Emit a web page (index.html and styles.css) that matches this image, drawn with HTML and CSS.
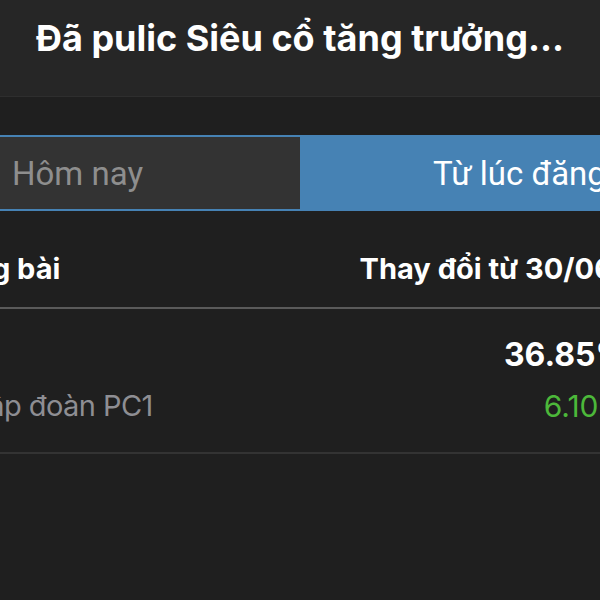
FILE: index.html
```html
<!DOCTYPE html>
<html lang="vi">
<head>
    <meta charset="UTF-8">
    <meta name="viewport" content="width=device-width, initial-scale=1.0">
    <title>Siêu cổ tăng trưởng</title>
    <link rel="stylesheet" href="styles.css">
</head>
<body>
    <header class="nav-bar">
        <h1>Đã pulic Siêu cổ tăng trưởng...</h1>
    </header>

    <div class="segment">
        <div class="segment-option">Hôm nay</div>
        <div class="segment-option active">Từ lúc đăng bài</div>
    </div>

    <div class="table">
        <div class="row head">
            <div class="cell-left">Mã đăng bài</div>
            <div class="cell-right">Thay đổi từ 30/06</div>
        </div>
        <div class="row item">
            <div class="cell-left">
                <span class="ticker">PC1</span>
                <span class="company">CTCP Tập đoàn PC1</span>
            </div>
            <div class="cell-right">
                <span class="price">36.85%</span>
                <span class="change">6.10%</span>
            </div>
        </div>
    </div>
</body>
</html>
```

FILE: styles.css
```css
:root {
    --bg: #1f1f1f;
    --bar: #262626;
    --blue: #4682b4;
    --text: #ffffff;
    --muted: #8e8e93;
    --green: #4cb83a;
}
html, body {
    margin: 0;
    padding: 0;
    width: 600px;
    height: 600px;
    overflow: hidden;
}
body {
    background: var(--bg);
    color: var(--text);
    font-family: Inter, 'Noto Sans', sans-serif;
}
.nav-bar {
    height: 96px;
    background: var(--bar);
    border-bottom: 1px solid #2e2e2e;
    display: flex;
    align-items: center;
    justify-content: center;
}
.nav-bar h1 {
    margin: 0 0 20px;
    font-size: 36px;
    font-weight: 700;
    white-space: nowrap;
}
.segment {
    display: flex;
    margin: 38px 0 0 -40px;
    width: 880px;
    height: 76px;
    box-sizing: border-box;
    border: 2px solid var(--blue);
    background: var(--blue);
}
.segment-option {
    flex: 1;
    display: flex;
    align-items: center;
    font-family: Roboto, sans-serif;
    font-size: 33px;
    white-space: nowrap;
}
.segment-option:first-child {
    flex: 0 0 338px;
    background: #333333;
    color: #8e8e8e;
    padding-left: 50px;
    box-sizing: border-box;
}
.segment-option.active {
    color: #fff;
    padding-left: 133px;
}
.table {
    width: 820px;
    margin-left: -112px;
}
.row {
    display: flex;
    justify-content: space-between;
    white-space: nowrap;
    box-sizing: border-box;
}
.cell-left, .cell-right {
    display: flex;
    flex-direction: column;
}
.cell-right {
    align-items: flex-end;
    margin-right: 80px;
}
.head {
    height: 98px;
    padding-top: 18px;
    align-items: center;
    font-size: 29px;
    font-weight: 700;
    border-bottom: 2px solid #5a5a5a;
}
.head .cell-right {
    padding-right: 15px;
}
.item {
    height: 145px;
    padding-top: 27px;
    border-bottom: 2px solid #333333;
    line-height: 1.2;
}
.ticker, .price {
    font-size: 32px;
    font-weight: 700;
}
.company, .change {
    font-size: 30px;
    margin-top: 14px;
    color: var(--muted);
}
.company {
    font-size: 29px;
    letter-spacing: -0.55px;
    margin-top: 15px;
}
.change {
    color: var(--green);
}
```
